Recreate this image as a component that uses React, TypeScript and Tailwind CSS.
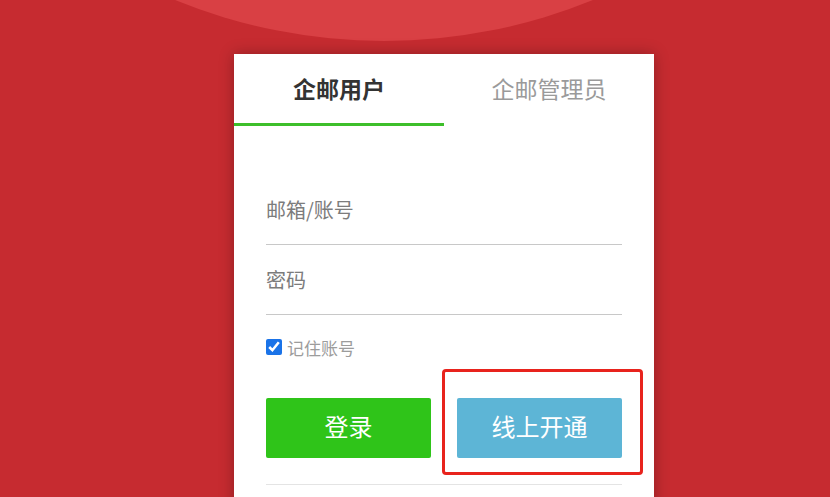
import React from "react";

export default function App() {
  return (
    <div
      className="relative w-[830px] h-[497px] overflow-hidden bg-[#c62b30]"
      style={{ fontFamily: '"Noto Sans CJK SC", "Noto Sans", sans-serif' }}
    >
      <div className="absolute left-[-169px] top-[-1065px] w-[1106px] h-[1106px] rounded-full bg-[#d94044]" />
      <div className="relative pl-[234px] pt-[54px]">
        <div className="relative w-[420px] bg-white shadow-[0_0_14px_rgba(0,0,0,0.28)] pb-[60px]">
          <div className="grid grid-cols-2 h-[72px]">
            <div className="flex items-center justify-center border-b-[3px] border-[#3dbf2a] text-[23px] font-bold text-[#333333]">
              企邮用户
            </div>
            <div className="flex items-center justify-center border-b-[3px] border-transparent text-[23px] text-[#9a9a9a]">
              企邮管理员
            </div>
          </div>
          <div className="px-8">
            <div className="mt-[49px] h-[70px] border-b border-[#c8c8c8] flex items-center">
              <input
                className="w-full bg-transparent outline-none text-[20px] text-[#555] placeholder:text-[#7c7c7c]"
                placeholder="邮箱/账号"
              />
            </div>
            <div className="h-[70px] border-b border-[#c8c8c8] flex items-center">
              <input
                type="text"
                className="w-full bg-transparent outline-none text-[20px] text-[#555] placeholder:text-[#7c7c7c]"
                placeholder="密码"
              />
            </div>
            <label className="mt-[24px] h-[16px] flex items-center gap-[5px]">
              <input type="checkbox" defaultChecked className="w-4 h-4 m-0 accent-[#1a73e8]" />
              <span className="text-[17px] leading-none text-[#9c9c9c]">记住账号</span>
            </label>
            <div className="mt-[43px] grid grid-cols-2 gap-[26px]">
              <button className="h-[60px] pb-[4px] rounded-[2px] bg-[#2fc419] text-white text-[24px]">登录</button>
              <button className="h-[60px] pb-[4px] rounded-[2px] bg-[#5db5d6] text-white text-[24px]">线上开通</button>
            </div>
            <div className="mt-[26px] border-t border-[#e4e4e4] h-[40px]" />
          </div>
          <div className="absolute left-[208px] top-[315px] w-[201px] h-[106px] border-[3px] border-[#e8231d] rounded-[4px]" />
        </div>
      </div>
    </div>
  );
}
